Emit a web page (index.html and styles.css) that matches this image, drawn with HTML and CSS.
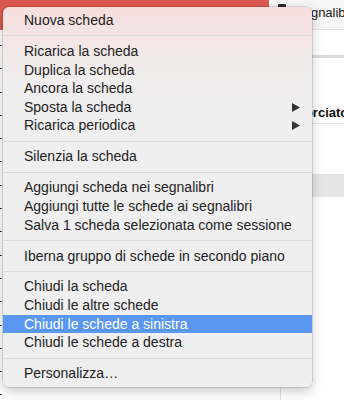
FILE: index.html
```html
<!DOCTYPE html>
<html lang="it">
<head>
<meta charset="utf-8">
<title>Menu scheda</title>
<link rel="stylesheet" href="styles.css">
</head>
<body>
<div class="page">
  <div class="main">
    <div class="main-head"></div>
    <ul class="rows">
      <li>1</li><li>1</li><li>1</li><li>1</li><li>1</li><li>1</li><li>1</li><li>1</li>
      <li>1</li><li>1</li><li>1</li><li>1</li><li>1</li><li>1</li><li>1</li><li>1</li>
    </ul>
  </div>
  <aside class="side">
    <div class="side-top"><span class="side-icon"></span><span class="side-title">Segnalibri</span></div>
    <div class="side-search"></div>
    <div class="side-head">Scorciatoie</div>
    <div class="side-list">
      <div class="side-row"></div>
      <div class="side-row"></div>
      <div class="side-row side-row-sel"></div>
    </div>
    <div class="side-foot"></div>
  </aside>
</div>

<div class="menu" role="menu">
  <div class="item">Nuova scheda</div>
  <div class="sep"></div>
  <div class="item">Ricarica la scheda</div>
  <div class="item">Duplica la scheda</div>
  <div class="item">Ancora la scheda</div>
  <div class="item">Sposta la scheda<svg class="arrow" width="8" height="9" viewBox="0 0 8 9"><polygon points="0,0 8,4.5 0,9"/></svg></div>
  <div class="item">Ricarica periodica<svg class="arrow" width="8" height="9" viewBox="0 0 8 9"><polygon points="0,0 8,4.5 0,9"/></svg></div>
  <div class="sep"></div>
  <div class="item">Silenzia la scheda</div>
  <div class="sep"></div>
  <div class="item">Aggiungi scheda nei segnalibri</div>
  <div class="item">Aggiungi tutte le schede ai segnalibri</div>
  <div class="item">Salva 1 scheda selezionata come sessione</div>
  <div class="sep"></div>
  <div class="item">Iberna gruppo di schede in secondo piano</div>
  <div class="sep"></div>
  <div class="item">Chiudi la scheda</div>
  <div class="item">Chiudi le altre schede</div>
  <div class="item item-active">Chiudi le schede a sinistra</div>
  <div class="item">Chiudi le schede a destra</div>
  <div class="sep"></div>
  <div class="item">Personalizza…</div>
</div>
</body>
</html>
```
FILE: styles.css
```css
html, body {
  margin: 0;
  padding: 0;
}
body {
  width: 344px;
  height: 400px;
  overflow: hidden;
  background: #ffffff;
  font-family: "Liberation Sans", Arial, sans-serif;
  position: relative;
}
.page {
  display: flex;
  height: 400px;
}
.main {
  width: 269px;
  flex: none;
  background: #ffffff;
}
.main-head {
  height: 30px;
  background: #dc5850;
}
.rows {
  list-style: none;
  margin: 0;
  padding: 0;
}
.rows li {
  height: 23.3px;
  line-height: 23.3px;
  font-size: 13px;
  color: #111;
  margin-left: -5px;
}
.side {
  flex: 1;
  display: flex;
  flex-direction: column;
  background: #ffffff;
}
.side-top {
  height: 30px;
  box-sizing: border-box;
  background: #f6f6f6;
  border-bottom: 1px solid #e2e2e2;
  display: flex;
  align-items: flex-start;
  padding: 5px 0 0 9px;
  gap: 9px;
  font-size: 13px;
  color: #222;
}
.side-icon {
  width: 8px;
  height: 11px;
  background: #2a2a2a;
  border-radius: 1px;
  flex: none;
  margin-top: -1px;
}
.side-title {
  line-height: 15px;
  white-space: nowrap;
}
.side-search {
  height: 25px;
  border-bottom: 3px solid #dcdcdc;
  flex: none;
}
.side-head {
  margin-top: 45px;
  height: 20px;
  line-height: 20px;
  padding-left: 20px;
  font-size: 13px;
  font-weight: bold;
  color: #111;
  white-space: nowrap;
  border-bottom: 1px solid #e2e2e2;
  flex: none;
}
.side-list {
  display: flex;
  flex-direction: column;
  margin-top: 4px;
}
.side-row {
  height: 23px;
}
.side-row-sel {
  background: #e6e6e6;
}
.side-foot {
  flex: 1;
  margin-left: 11px;
  border-left: 1px solid #e0e0e0;
}

.menu {
  position: absolute;
  left: 3px;
  top: 7px;
  width: 309px;
  box-sizing: border-box;
  padding: 4px 0;
  border-radius: 6px;
  background: linear-gradient(to bottom, #f7dedd 0px, #f3e6e6 35px, #f0eded 70px, #efefef 110px, #efefef 100%);
  box-shadow: 0 0 0 0.5px rgba(0, 0, 0, 0.22), 0 4px 12px rgba(0, 0, 0, 0.22);
  font-size: 14px;
  color: #222222;
}
.item {
  height: 18.6px;
  line-height: 18.6px;
  padding: 0 12px 0 21px;
  display: flex;
  align-items: center;
  justify-content: space-between;
  white-space: nowrap;
}
.item-active {
  background: #5a97f3;
  color: #ffffff;
}
.arrow {
  fill: #333333;
  flex: none;
}
.sep {
  height: 12.4px;
  display: flex;
  align-items: center;
}
.sep::before {
  content: "";
  flex: 1;
  height: 1px;
  background: #d9d9d9;
}
```
